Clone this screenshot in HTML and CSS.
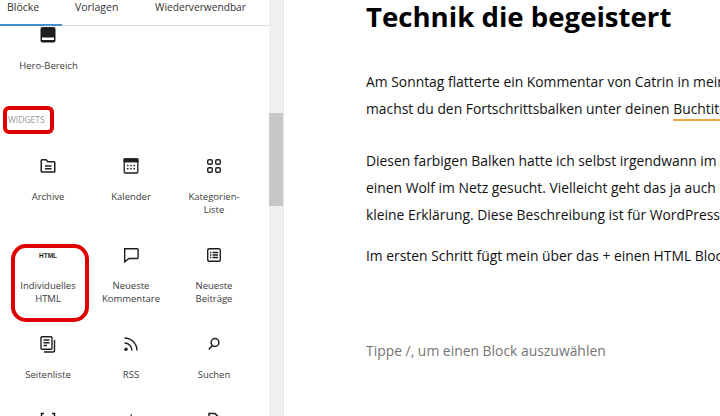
FILE: index.html
```html
<!DOCTYPE html>
<html lang="de">
<head>
<meta charset="utf-8">
<title>Technik die begeistert</title>
<link rel="stylesheet" href="styles.css">
</head>
<body>
<div class="app">
  <aside class="sidebar">
    <div class="panel">
      <nav class="tabs">
        <span class="tab tab-active">Blöcke</span>
        <span class="tab tab-templates">Vorlagen</span>
        <span class="tab tab-reuse">Wiederverwendbar</span>
      </nav>
      <div class="block-list">
        <div class="hero">
          <svg class="icon" viewBox="0 0 24 24"><rect x="4.500" y="4" width="15" height="15.500" rx="2" fill="#1e1e1e"/><rect x="6" y="14.500" width="12" height="2.500" fill="#fff"/></svg>
          <span class="label">Hero-Bereich</span>
        </div>
        <h2 class="group-title"><span class="mark">WIDGETS</span></h2>
        <div class="grid">
          <div class="item">
            <svg class="icon" viewBox="0 0 24 24" fill="none" stroke="#1e1e1e" stroke-width="1.500"><path d="M5.250 17.200V6.500a.8.8 0 0 1 .8-.8h4l1.800 2h6.100a.8.8 0 0 1 .8.8v8.700a.8.8 0 0 1-.8.8H6.050a.8.8 0 0 1-.8-.8z"/><path d="M9 12h6.500M9 14.800h6.500"/></svg>
            <span class="label">Archive</span>
          </div>
          <div class="item">
            <svg class="icon" viewBox="0 0 24 24" fill="none" stroke="#1e1e1e" stroke-width="1.300"><rect x="5.200" y="5" width="13.600" height="14" rx="1"/><rect x="5.200" y="5" width="13.600" height="2.800" fill="#1e1e1e"/><path d="M8 11.500h1.500M11.200 11.500h1.500M14.500 11.500h1.500M8 14.700h1.500M11.200 14.700h1.500M14.500 14.700h1.500" stroke-width="1.600"/></svg>
            <span class="label">Kalender</span>
          </div>
          <div class="item">
            <svg class="icon" viewBox="0 0 24 24" fill="none" stroke="#1e1e1e" stroke-width="1.400"><rect x="5.700" y="5.700" width="4.600" height="4.600" rx="1.300"/><rect x="13.700" y="5.700" width="4.600" height="4.600" rx="1.300"/><rect x="5.700" y="13.700" width="4.600" height="4.600" rx="1.300"/><rect x="13.700" y="13.700" width="4.600" height="4.600" rx="1.300"/></svg>
            <span class="label">Kategorien-<br>Liste</span>
          </div>
          <div class="item item-marked">
            <svg class="icon" viewBox="0 0 24 24"><text x="12" y="14.500" class="html-glyph" text-anchor="middle">HTML</text></svg>
            <span class="label">Individuelles<br>HTML</span>
          </div>
          <div class="item">
            <svg class="icon" viewBox="0 0 24 24" fill="none" stroke="#1e1e1e" stroke-width="1.400"><path d="M5.700 5.700h12.600a.8.8 0 0 1 .8.8v8.200a.8.8 0 0 1-.8.8H10l-4.300 3.300z"/></svg>
            <span class="label">Neueste<br>Kommentare</span>
          </div>
          <div class="item">
            <svg class="icon" viewBox="0 0 24 24" fill="none" stroke="#1e1e1e" stroke-width="1.400"><rect x="5.700" y="5.700" width="12.600" height="12.600" rx="1.500"/><path d="M8 9.500h1.300M10.500 9.500h5.500M8 12h1.300M10.500 12h5.500M8 14.500h1.300M10.500 14.500h5.500"/></svg>
            <span class="label">Neueste<br>Beiträge</span>
          </div>
          <div class="item">
            <svg class="icon" viewBox="0 0 24 24" fill="none" stroke="#1e1e1e" stroke-width="1.400"><path d="M6 4.700h9a1 1 0 0 1 1 1v10.500a1 1 0 0 1-1 1H6a1 1 0 0 1-1-1V5.700a1 1 0 0 1 1-1z"/><path d="M7.500 8h6M7.500 10.800h6M7.500 13.500h3.500M18.500 8v10.500a1.500 1.500 0 0 1-1.500 1.500H8"/></svg>
            <span class="label">Seitenliste</span>
          </div>
          <div class="item">
            <svg class="icon" viewBox="0 0 24 24" fill="none" stroke="#1e1e1e" stroke-width="1.400"><path d="M5.500 11a7.500 7.500 0 0 1 7.500 7.500M5.500 6A12.500 12.500 0 0 1 18 18.500"/><circle cx="7" cy="17.300" r="1.700" fill="#1e1e1e" stroke="none"/></svg>
            <span class="label">RSS</span>
          </div>
          <div class="item">
            <svg class="icon" viewBox="0 0 24 24" fill="none" stroke="#1e1e1e" stroke-width="1.500"><circle cx="13" cy="10.500" r="3.900"/><path d="M10.300 13.500l-3.500 4"/></svg>
            <span class="label">Suchen</span>
          </div>
          <div class="item">
            <svg class="icon" viewBox="0 0 24 24" fill="none" stroke="#1e1e1e" stroke-width="1.500"><path d="M8 5.500H5.500v3M16 5.500h2.500v3M8 19H5.500v-3M16 19h2.500v-3"/></svg>
          </div>
          <div class="item">
            <svg class="icon" viewBox="0 0 24 24" fill="#1e1e1e"><path d="M13 5l-5 8h3.500l-1 7 5.500-9h-4z"/></svg>
          </div>
          <div class="item">
            <svg class="icon" viewBox="0 0 24 24" fill="none" stroke="#1e1e1e" stroke-width="1.500"><path d="M7 5.500h6l4 4V20H7z"/></svg>
          </div>
        </div>
      </div>
    </div>
    <div class="scrollbar"><div class="thumb"></div></div>
  </aside>
  <main class="editor">
    <h1 class="title">Technik die begeistert</h1>
    <p class="para para-first">Am Sonntag flatterte ein Kommentar von Catrin in meinen Blog. Sie fragte mich: Wie<br>machst du den Fortschrittsbalken unter deinen <span class="link">Buchtiteln?</span> Den möchte ich auch.</p>
    <p class="para para-second">Diesen farbigen Balken hatte ich selbst irgendwann im Netz gefunden und mir dafür<br>einen Wolf im Netz gesucht. Vielleicht geht das ja auch anderen so, deshalb hier eine<br>kleine Erklärung. Diese Beschreibung ist für WordPress mit dem Gutenberg Editor.</p>
    <p class="para para-third">Im ersten Schritt fügt mein über das + einen HTML Block in den Beitrag ein.</p>
    <p class="placeholder">Tippe /, um einen Block auszuwählen</p>
  </main>
</div>
</body>
</html>
```
FILE: styles.css
```css
*, *::before, *::after { box-sizing: border-box; }
html, body { margin: 0; height: 100%; }
body {
  width: 720px;
  height: 416px;
  overflow: hidden;
  background: #fff;
  font-family: "Open Sans", "Noto Sans", sans-serif;
  color: #1e1e1e;
}
.app { display: flex; height: 416px; overflow: hidden; }
.sidebar {
  flex: 0 0 284px;
  display: flex;
  border-right: 1px solid #e6e6e6;
  height: 416px;
}
.panel { width: 269px; height: 416px; overflow: hidden; }
.scrollbar { flex: 0 0 14px; background: #efefef; }
.thumb { margin-top: 113px; height: 93px; background: #c8c8c8; }
.tabs {
  display: flex;
  height: 26px;
  border-bottom: 1px solid #ddd;
  font-size: 10.500px;
  color: #333;
}
.tab { display: block; line-height: 14px; }
.tab-active { width: 62px; padding-left: 7px; box-shadow: inset 0 -2px 0 #4a90c8; height: 26px; }
.tab-templates { width: 93px; padding-left: 13px; }
.tab-reuse { font-size: 10.200px; }
.hero { width: 96px; margin-top: -3px; display: flex; flex-direction: column; align-items: center; }
.icon { width: 24px; height: 24px; display: block; flex: none; }
.label { font-size: 9.500px; line-height: 13px; text-align: center; color: #3c3c3c; display: block; }
.hero .label { margin-top: 12px; margin-left: 1px; }
.group-title { margin: 42px 0 0 8px; font-size: 8.500px; font-weight: 400; line-height: 12px; color: #999; height: 12px; }
.mark { position: relative; display: inline-block; }
.mark::after {
  content: "";
  position: absolute;
  left: -5px; right: -9px; top: -8px; bottom: -8px;
  border: 4px solid #e00000;
  border-radius: 6px;
}
.grid { display: grid; grid-template-columns: 82px 84px 82px; row-gap: 27px; margin: 28px 0 0 7px; }
.item { display: flex; flex-direction: column; align-items: center; position: relative; }
.item .label { margin-top: 12px; }
.item-marked::after {
  content: "";
  position: absolute;
  left: 4px; right: 0; top: 1px; height: 78px;
  border: 4px solid #e00000;
  border-radius: 15px;
}
.html-glyph { font-family: "Liberation Sans", sans-serif; font-size: 6.500px; font-weight: 700; fill: #1e1e1e; }
.editor { flex: 1; padding-left: 82px; min-width: 0; white-space: nowrap; color: #111; overflow: hidden; }
.title { margin: 0; font-size: 27.600px; line-height: 32px; font-weight: 700; color: #000; }
.para { margin: 0; font-size: 13.870px; line-height: 27px; }
.para-first { margin-top: 36px; }
.para-second { margin-top: 25px; }
.para-third { margin-top: 14px; }
.link { text-decoration: underline; text-decoration-color: #eba93f; text-decoration-thickness: 1.500px; text-underline-offset: 5px; }
.placeholder { margin: 72px 0 0; font-size: 13.900px; line-height: 20px; color: #757575; }
```
